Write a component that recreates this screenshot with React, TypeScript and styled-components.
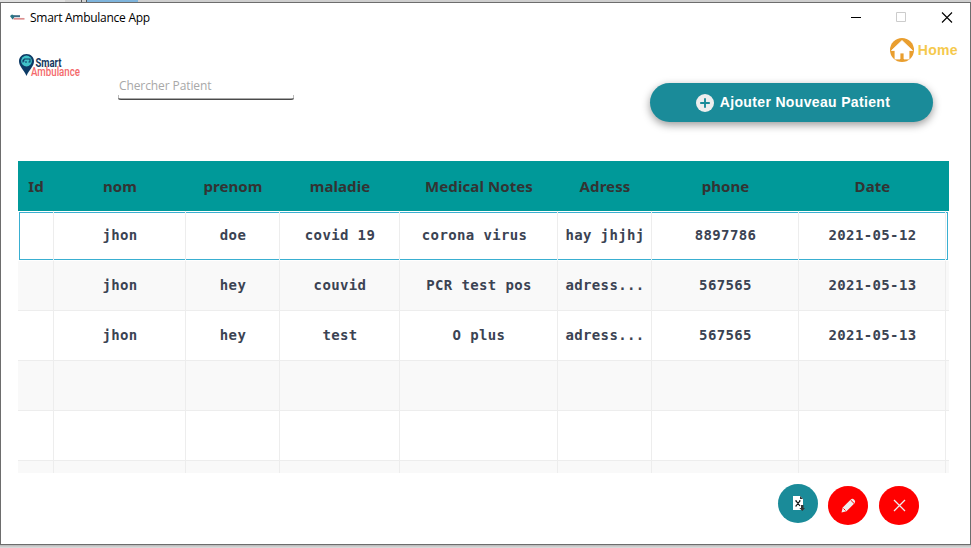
import React from 'react';
import styled, { createGlobalStyle } from 'styled-components';

const GlobalStyle = createGlobalStyle`
  * { box-sizing: border-box; }
  body { margin: 0; background: #d4d4d4; overflow: hidden; }
`;

const Desktop = styled.div`
  width: 971px;
  height: 548px;
  padding-top: 2px;
  background: linear-gradient(to right, #e0e0e0 0 65px, #d0d0d0 65px 81px, #555 81px 82px, #d0d0d0 82px 86px, #555 86px 87px, #7eb4dc 87px 138px, #cfcfcf 138px) top / 100% 2px no-repeat,
    linear-gradient(#b8b8b8, #e0e0e0) bottom / 100% 3px no-repeat;
`;

const Window = styled.div`
  display: flex;
  flex-direction: column;
  height: 543px;
  border: 1px solid #6d6d6d;
  background: #fff;
  font-family: 'Noto Sans', sans-serif;
`;

const TitleBar = styled.header`
  display: flex;
  align-items: center;
  height: 29px;
  padding: 0 17px 0 9px;
`;

const Title = styled.span`
  flex: 1;
  margin-left: 5px;
  font: 12px/16px 'Open Sans', sans-serif;
  letter-spacing: -0.27px;
  color: #000;
`;

const WindowControls = styled.div`
  display: flex;
  gap: 34px;
`;

const Top = styled.div`
  display: flex;
  justify-content: space-between;
  height: 129px;
`;

const Brand = styled.div`
  width: 81px;
  padding: 21px 0 0 17px;
`;

const SearchBox = styled.div`
  flex: 1;
  padding: 44px 0 0 35px;
`;

const SearchInput = styled.input`
  display: block;
  width: 178px;
  height: 24px;
  padding: 0 1px 6px;
  border: 1px solid transparent;
  border-bottom: 1px solid #4a4a4a;
  border-radius: 4px;
  outline: none;
  background:
    linear-gradient(#bbb, #bbb) left bottom / 1px 4px no-repeat,
    linear-gradient(#bbb, #bbb) right bottom / 1px 4px no-repeat,
    linear-gradient(#aaa, #aaa) left bottom / 100% 1px no-repeat;
  font: 12px/17px 'Open Sans', sans-serif;
  letter-spacing: -0.35px;
  &::placeholder { color: #a8a8a8; opacity: 1; letter-spacing: -0.1px; }
`;

const Actions = styled.div`
  display: flex;
  flex-direction: column;
  align-items: flex-end;
  padding: 5px 12px 0 0;
`;

const HomeButton = styled.button`
  display: flex;
  align-items: center;
  gap: 4px;
  height: 26px;
  padding: 0 0 1px;
  border: 0;
  background: none;
  color: #f5c94c;
  font: bold 14px/16px 'Liberation Sans', Arial, sans-serif;
  letter-spacing: 0.35px;
`;

const AddButton = styled.button`
  display: flex;
  align-items: center;
  justify-content: center;
  gap: 6px;
  width: 283px;
  height: 39px;
  margin: 20px 25px 0 0;
  padding: 0 0 0 3px;
  border: 0;
  border-radius: 20px;
  background: #1a8b99;
  box-shadow: 0 3px 8px rgba(0, 0, 0, 0.4);
  color: #fff;
  font: bold 14px/18px 'Liberation Sans', Arial, sans-serif;
  letter-spacing: 0.34px;
  white-space: nowrap;
`;

const AddLabel = styled.span`
  padding-bottom: 1px;
`;

const Table = styled.div`
  width: 931px;
  height: 312px;
  margin-left: 17px;
  overflow: hidden;
`;

const columns = 'grid-template-columns: 36px 132px 94px 120px 158px 94px 147px 147px 3px;';

const HeadRow = styled.div`
  display: grid;
  ${columns}
  height: 50px;
  background: #009999;
`;

const HeadCell = styled.div`
  display: flex;
  align-items: center;
  justify-content: center;
  padding-bottom: 1px;
  color: #333;
  font: bold 15px/20px 'Noto Sans', sans-serif;
  letter-spacing: 0.08px;
  white-space: nowrap;
`;

const Row = styled.div<{ $striped: boolean; $focused: boolean }>`
  display: grid;
  ${columns}
  height: 50px;
  background: ${p => (p.$striped ? '#f9f9f9' : '#fff')};
  ${p => p.$focused && `
    background:
      linear-gradient(#39afd1, #39afd1) 1px 1px / 929px 1px no-repeat,
      linear-gradient(#39afd1, #39afd1) 1px 48px / 929px 1px no-repeat,
      linear-gradient(#39afd1, #39afd1) 1px 1px / 1px 48px no-repeat,
      linear-gradient(#39afd1, #39afd1) 929px 1px / 1px 48px no-repeat, #fff;
  `}
`;

const Cell = styled.div<{ $last: boolean; $plain: boolean }>`
  display: flex;
  align-items: center;
  justify-content: center;
  padding: 0 0 1px 1px;
  border-right: ${p => (p.$last ? '0' : '1px solid #ededed')};
  border-bottom: 1px solid ${p => (p.$plain ? 'transparent' : '#ededed')};
  color: #3b4353;
  font: bold 14px/18px 'DejaVu Sans Mono', monospace;
  letter-spacing: 0.37px;
  white-space: pre;
`;

const Footer = styled.footer`
  display: flex;
  gap: 10px;
  padding: 11px 0 0 777px;
`;

const RoundButton = styled.button<{ $tone: 'teal' | 'red' }>`
  display: flex;
  align-items: center;
  justify-content: center;
  width: 40px;
  height: 39px;
  margin: ${p => (p.$tone === 'teal' ? '0' : '2px 0 0')};
  padding: 0;
  border: 0;
  border-radius: 50%;
  background: ${p => (p.$tone === 'teal' ? '#1a8b99' : '#ff0000')};
  & + & + & { margin-left: 1px; }
`;

const headings = ['Id', 'nom', 'prenom', 'maladie', 'Medical Notes', 'Adress', 'phone', 'Date', ''];
const blank = Array<string>(9).fill('');
const rows = [
  ['', 'jhon', 'doe', 'covid 19', 'corona virus ', 'hay jhjhj', '8897786', '2021-05-12', ''],
  ['', 'jhon', 'hey', 'couvid', 'PCR test pos', 'adress...', '567565', '2021-05-13', ''],
  ['', 'jhon', 'hey', 'test', 'O plus', 'adress...', '567565', '2021-05-13', ''],
  blank,
  blank,
  blank,
];

const Logo = () => (
  <svg width="70" height="30" viewBox="0 0 70 30">
    <path d="M8.500 1C4 1 1 4.300 1 8.300c0 5 4.500 8 7.500 14.700C11.500 16.300 16 13.300 16 8.300 16 4.300 13 1 8.500 1Z" fill="#0d3b66" />
    <circle cx="8.500" cy="8" r="5.400" fill="#41c3c9" />
    <path d="M5 9.500V7.500l1.500-1.500h5.500v3h-1.500M7 9h2M4.500 8h2" fill="none" stroke="#0d3b66" strokeWidth="1.100" />
    <text x="17.500" y="14" fontFamily="Roboto, sans-serif" fontSize="13" fontWeight="700" fill="#16395f" textLength="26" lengthAdjust="spacingAndGlyphs">Smart</text>
    <text x="13" y="23" fontFamily="Roboto, sans-serif" fontSize="12.500" fontWeight="500" fill="#f4696b" textLength="49" lengthAdjust="spacingAndGlyphs">Ambulance</text>
  </svg>
);

const AppIcon = () => (
  <svg width="15" height="7" viewBox="0 0 15 7">
    <path d="M0 2 2 .5 4.500 1.500 4 4 2.500 5.500Z" fill="#2a7585" />
    <path d="M4 2.200h6" stroke="#3b6b85" strokeWidth="2" />
    <path d="M3.500 4.800h11" stroke="#dc8f8f" strokeWidth="1.700" />
  </svg>
);

const HomeIcon = () => (
  <svg width="24" height="24" viewBox="0 0 24 24">
    <circle cx="12" cy="12" r="12" fill="#e99e2e" />
    <path d="M12 2.500 1.500 12.500H5V21h5v-6h4v6h5v-8.500h3.500Z" fill="#fff" stroke="#fff" strokeWidth=".8" />
  </svg>
);

const PlusIcon = () => (
  <svg width="18" height="18" viewBox="0 0 18 18">
    <circle cx="9" cy="9" r="9" fill="#eee" />
    <path d="M9 4.200v9.600M4.200 9h9.600" stroke="#1a8b99" strokeWidth="1.900" />
  </svg>
);

const ExportIcon = () => (
  <svg width="13" height="15" viewBox="0 0 13 15">
    <path d="M1 0h7l3 3v11H1Z" fill="#fff" />
    <path d="M8 0l3 3H8Z" fill="#333" />
    <path d="M4 4.800 8 10M8 4.800 4 10M3.300 4.800h1.500M7 4.800h1.500M3.300 10h1.500" stroke="#111" strokeWidth="1.200" />
    <path d="M9 9h2.500v3H13l-2.700 3-3-3H9Z" fill="#333" />
  </svg>
);

const PencilIcon = () => (
  <svg width="15" height="15" viewBox="0 0 15 15">
    <path d="M.5 14.500 1.700 9.500 9.800 1.400Q11.500 0 13.200 1.700T13.500 5.200L5.500 13.300Z" fill="#eee" />
    <path d="m9.600 2 3.400 3.400M2.500 10.500l2 2" stroke="#ff0000" strokeWidth="1" />
  </svg>
);

export default function App() {
  return (
    <>
      <GlobalStyle />
      <Desktop>
        <Window>
          <TitleBar>
            <AppIcon />
            <Title>Smart Ambulance App</Title>
            <WindowControls>
              <svg width="11" height="11"><path d="M0 5.500h10" stroke="#000" /></svg>
              <svg width="11" height="11"><path d="M.5.500h9v9h-9Z" fill="none" stroke="#ccc" /></svg>
              <svg width="12" height="11"><path d="m1 .5 10 10m0-10-10 10" stroke="#000" strokeWidth="1.100" /></svg>
            </WindowControls>
          </TitleBar>
          <Top>
            <Brand><Logo /></Brand>
            <SearchBox><SearchInput placeholder="Chercher Patient" /></SearchBox>
            <Actions>
              <HomeButton><HomeIcon />Home</HomeButton>
              <AddButton><PlusIcon /><AddLabel>Ajouter Nouveau Patient</AddLabel></AddButton>
            </Actions>
          </Top>
          <Table>
            <HeadRow>{headings.map((h, i) => <HeadCell key={i}>{h}</HeadCell>)}</HeadRow>
            {rows.map((row, r) => (
              <Row key={r} $striped={r % 2 === 1} $focused={r === 0}>
                {row.map((value, c) => (
                  <Cell key={c} $last={c === 8} $plain={r === 0}>{value}</Cell>
                ))}
              </Row>
            ))}
          </Table>
          <Footer>
            <RoundButton $tone="teal"><ExportIcon /></RoundButton>
            <RoundButton $tone="red"><PencilIcon /></RoundButton>
            <RoundButton $tone="red">
              <svg width="13" height="13"><path d="m1 1 11 11M12 1 1 12" stroke="#eee" strokeWidth="1.300" /></svg>
            </RoundButton>
          </Footer>
        </Window>
      </Desktop>
    </>
  );
}
